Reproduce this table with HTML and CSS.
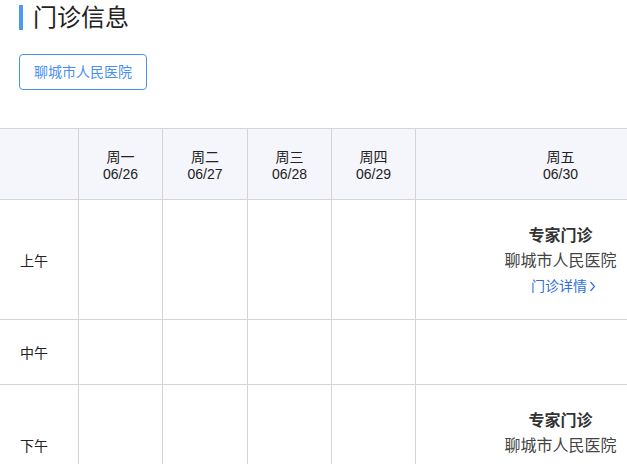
FILE: index.html
```html
<!DOCTYPE html>
<html lang="zh-CN">
<head>
<meta charset="utf-8">
<title>门诊信息</title>
<link rel="stylesheet" href="styles.css">
</head>
<body>
<div class="page">
  <h1 class="title">门诊信息</h1>
  <div class="filters">
    <button class="hosp-btn" type="button">聊城市人民医院</button>
  </div>
  <table class="schedule">
    <colgroup>
      <col class="c-label">
      <col class="c-day">
      <col class="c-day2">
      <col class="c-day">
      <col class="c-day">
      <col class="c-wide">
    </colgroup>
    <thead>
      <tr>
        <th></th>
        <th><div>周一</div><div>06/26</div></th>
        <th><div>周二</div><div>06/27</div></th>
        <th><div>周三</div><div>06/28</div></th>
        <th><div>周四</div><div>06/29</div></th>
        <th><div>周五</div><div>06/30</div></th>
      </tr>
    </thead>
    <tbody>
      <tr class="row-tall">
        <td class="label">上午</td>
        <td></td><td></td><td></td><td></td>
        <td class="slot">
          <div class="slot-body">
            <div class="slot-type">专家门诊</div>
            <div class="slot-hosp">聊城市人民医院</div>
            <a class="slot-link" href="#">门诊详情<svg class="chev" width="7" height="11" viewBox="0 0 7 11"><polyline points="1.5,1 5.5,5.5 1.5,10" fill="none" stroke="currentColor" stroke-width="1.2"/></svg></a>
          </div>
        </td>
      </tr>
      <tr class="row-short">
        <td class="label">中午</td>
        <td></td><td></td><td></td><td></td><td></td>
      </tr>
      <tr class="row-tall">
        <td class="label">下午</td>
        <td></td><td></td><td></td><td></td>
        <td class="slot">
          <div class="slot-body">
            <div class="slot-type">专家门诊</div>
            <div class="slot-hosp">聊城市人民医院</div>
            <a class="slot-link" href="#">门诊详情<svg class="chev" width="7" height="11" viewBox="0 0 7 11"><polyline points="1.5,1 5.5,5.5 1.5,10" fill="none" stroke="currentColor" stroke-width="1.2"/></svg></a>
          </div>
        </td>
      </tr>
    </tbody>
  </table>
</div>
</body>
</html>
```

FILE: styles.css
```css
html, body {
  margin: 0;
  padding: 0;
  background: #fff;
}

body {
  font-family: "Liberation Sans", "Noto Sans CJK SC", sans-serif;
  color: #222;
  overflow: hidden;
}

.page {
  padding-top: 5px;
}

.title {
  margin: 0 0 0 19px;
  padding-left: 10px;
  border-left: 4px solid #4a9cf2;
  font-size: 24px;
  font-weight: normal;
  line-height: 25px;
  color: #222;
}

.filters {
  padding: 24px 19px 0;
}

.hosp-btn {
  height: 36px;
  padding: 0 14px;
  border: 1px solid #4a92f2;
  border-radius: 4px;
  background: #fff;
  color: #4a8ff0;
  font-family: inherit;
  font-size: 14px;
  line-height: 34px;
}

.schedule {
  margin-top: 38px;
  margin-left: -1px;
  border-collapse: collapse;
  table-layout: fixed;
  width: 706px;
}

.c-label { width: 79px; }
.c-day { width: 84px; }
.c-day2 { width: 85px; }
.c-wide { width: 290px; }

.schedule th,
.schedule td {
  border: 1px solid #d4d4d4;
  padding: 0;
  text-align: center;
  vertical-align: middle;
}

.schedule thead th {
  height: 70px;
  background: #f5f6fb;
  font-weight: normal;
  font-size: 14px;
  line-height: 17px;
  color: #222;
}

.schedule thead th div:first-child {
  padding-top: 4px;
}

.row-tall td { height: 119px; }
.row-short td { height: 64px; }

.schedule td.label {
  text-align: left;
  padding-left: 20px;
  font-size: 14px;
  color: #222;
}

.slot-body {
  padding-top: 3px;
  font-size: 16px;
  line-height: 24px;
}

.slot-type {
  font-weight: bold;
  color: #333;
}

.slot-hosp {
  color: #444;
  line-height: 26px;
}

.slot-link {
  display: inline-flex;
  align-items: center;
  gap: 2px;
  font-size: 14px;
  line-height: 22px;
  color: #2e6fdc;
  text-decoration: none;
  padding-left: 6px;
}

.chev {
  display: block;
}
```
